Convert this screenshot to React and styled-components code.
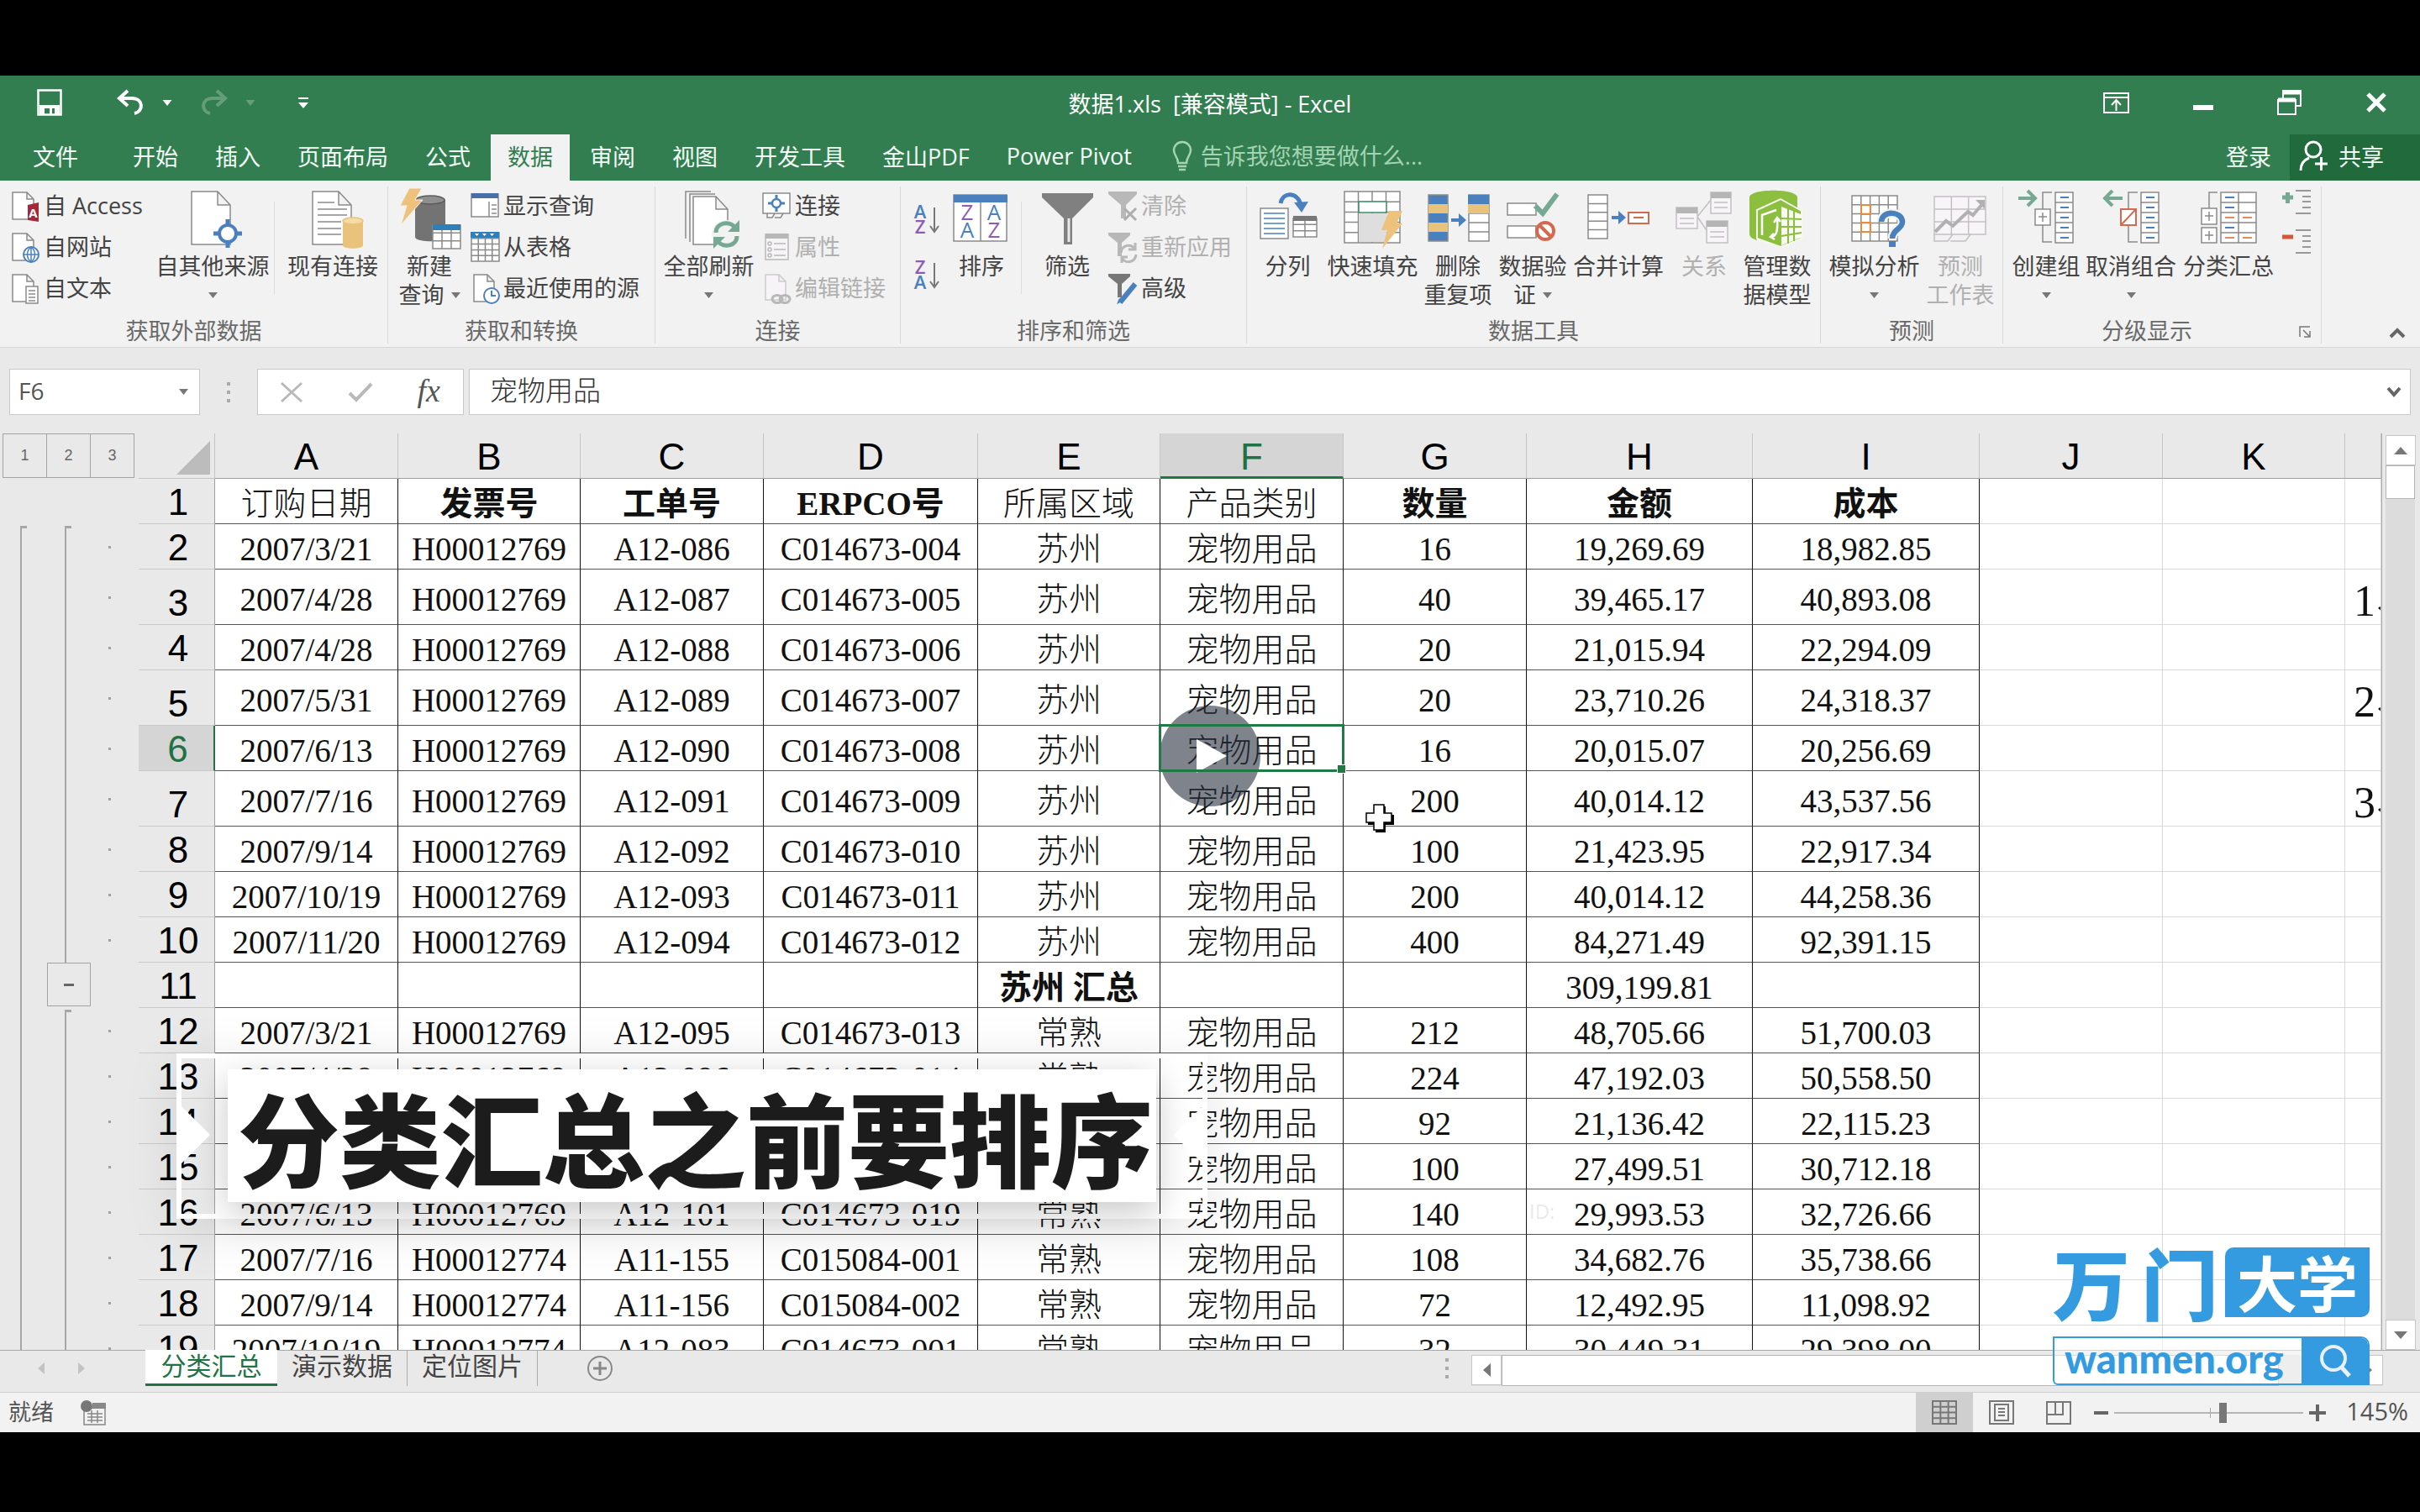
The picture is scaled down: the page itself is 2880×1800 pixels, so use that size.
import React from "react";
import styled, { createGlobalStyle, css } from "styled-components";

const ui = '"Open Sans", "Noto Sans CJK SC", sans-serif';
const song = '"Liberation Serif", "Noto Sans CJK SC", serif';
const green = "#337e50";
const line = "#8a8a8a";
const blue = "#4a80bd";
const logoBlue = "#359be1";

const GlobalStyle = createGlobalStyle`
  *, *::before, *::after { box-sizing: border-box; }
  html, body { margin: 0; background: #000; }
  body { font-family: ${ui}; font-size: 27px; color: #444; }
  button, input { font: inherit; color: inherit; border: 0; background: none; padding: 0; margin: 0; border-radius: 0; outline: none; }
  svg { display: block; flex: none; overflow: visible; }
`;

const Player = styled.div`
  position: relative;
  display: flex;
  height: 100vh;
  padding: 90px 0 95px;
  background: #000;
  overflow: hidden;
`;

const Window = styled.main`
  flex: 1;
  min-width: 0;
  display: flex;
  flex-direction: column;
  background: #e9e9e9;
`;

/* ---------- title bar ---------- */

const TitleBar = styled.header`
  flex: none;
  display: grid;
  grid-template-columns: 1fr auto 1fr;
  height: 70px;
  background: ${green};
  color: #fff;
`;

const Title = styled.h1`
  margin: 0;
  font-size: 27px;
  font-weight: 400;
  line-height: 68px;
  white-space: pre;
`;

const QuickAccess = styled.div`
  display: flex;
  align-items: center;
  padding: 0 0 6px 44px;
`;

const QuickButton = styled.button`
  margin-left: ${(p) => p.$gap || 0}px;
  color: #fff;
  opacity: ${(p) => (p.disabled ? 0.25 : 1)};
`;

const WindowControls = styled.div`
  display: flex;
  justify-content: flex-end;
  align-items: center;
  gap: 76px;
  padding: 0 40px 6px 0;
`;

/* ---------- ribbon tabs ---------- */

const TabBar = styled.nav`
  flex: none;
  display: flex;
  height: 55px;
  background: ${green};
  color: #f4fff7;
`;

const FileTab = styled.button`
  padding: 0 39px 4px;
  margin-right: 6px;
`;

const RibbonTab = styled.button`
  padding: 0 20px 4px;
  margin-right: 4px;
  white-space: nowrap;
  ${(p) => p.$active && css`
    background: #f2f2f2;
    color: ${green};
  `}
`;

const TellMe = styled.label`
  flex: 1;
  display: flex;
  align-items: center;
  gap: 10px;
  padding: 0 0 4px 24px;
  color: #a3d3b3;
`;

const TellMeInput = styled.input`
  width: 300px;
  &::placeholder { color: #a3d3b3; opacity: 1; }
`;

const SignIn = styled.button`
  padding: 0 22px 4px;
`;

const Share = styled.button`
  display: flex;
  align-items: center;
  gap: 12px;
  width: 155px;
  padding: 0 0 4px 11px;
  background: #216a3c;
`;

/* ---------- ribbon ---------- */

const Ribbon = styled.section`
  flex: none;
  display: flex;
  height: 199px;
  padding: 7px 0 4px;
  background: #f2f2f2;
  border-bottom: 1px solid #d5d5d5;
`;

const Group = styled.div`
  position: relative;
  flex: none;
  display: flex;
  flex-direction: column;
  width: ${(p) => p.$w}px;
  border-right: 1px solid #d8d8d8;
`;

const GroupBody = styled.div`
  flex: 1;
  display: flex;
  padding-left: ${(p) => p.$pad || 0}px;
`;

const GroupLabel = styled.div`
  height: 30px;
  line-height: 30px;
  text-align: center;
  color: #6a6a6a;
  padding-right: ${(p) => p.$shift || 0}px;
`;

const Large = styled.button`
  flex: none;
  display: flex;
  flex-direction: column;
  align-items: center;
  width: ${(p) => p.$w}px;
  line-height: 34px;
  white-space: nowrap;
  color: ${(p) => (p.disabled ? "#b0b0b0" : "#444")};
`;

const LargeLine = styled.span`
  display: flex;
  align-items: center;
  justify-content: center;
  gap: 8px;
  height: 34px;
`;

const Divider = styled.span`
  flex: none;
  width: 1px;
  height: 110px;
  margin: 18px 5px 0 0;
  background: #dedede;
`;

const SmallColumn = styled.div`
  flex: none;
  display: flex;
  flex-direction: column;
  width: ${(p) => p.$w}px;
  padding-left: ${(p) => p.$pad || 0}px;
`;

const Small = styled.button`
  display: flex;
  align-items: center;
  gap: 5px;
  height: 49px;
  line-height: 36px;
  padding-bottom: 3px;
  white-space: nowrap;
  color: ${(p) => (p.disabled ? "#b0b0b0" : "#444")};
`;

const SortColumn = styled.div`
  display: flex;
  flex-direction: column;
  gap: 28px;
  width: 49px;
  padding: 20px 0 0 16px;
`;

const DetailColumn = styled.div`
  display: flex;
  flex-direction: column;
  gap: 16px;
  padding-top: 3px;
`;

const Launcher = styled.button`
  position: absolute;
  right: 12px;
  bottom: 7px;
`;

const Collapse = styled.button`
  margin-left: auto;
  align-self: flex-end;
  padding: 0 17px 6px 0;
`;

/* ---------- formula bar ---------- */

const FormulaBar = styled.section`
  flex: none;
  display: flex;
  height: 102px;
  padding: 25px 11px 22px;
`;

const NameBox = styled.div`
  display: flex;
  align-items: center;
  width: 227px;
  padding: 0 13px 0 10px;
  background: #fff;
  border: 1px solid #c9c9c9;
`;

const NameInput = styled.input`
  flex: 1;
  min-width: 0;
  padding-bottom: 3px;
  font-size: 28px;
  color: #555;
`;

const Grip = styled.span`
  display: flex;
  flex-direction: column;
  justify-content: center;
  align-items: center;
  gap: 6px;
  width: ${(p) => p.$w}px;
  &::before, &::after, i { content: ""; width: 4px; height: 4px; background: #aaa; }
`;

const EditTools = styled.div`
  display: flex;
  align-items: center;
  justify-content: space-between;
  width: 246px;
  padding: 0 27px 0 26px;
  margin-right: 6px;
  background: #fff;
  border: 1px solid #c9c9c9;
`;

const Fx = styled.button`
  font-family: "Liberation Serif", serif;
  font-style: italic;
  font-size: 38px;
  line-height: 48px;
  padding-bottom: 3px;
  color: #555;
`;

const FormulaBox = styled.div`
  flex: 1;
  display: flex;
  align-items: center;
  padding: 0 10px 0 24px;
  background: #fff;
  border: 1px solid #c9c9c9;
`;

const FormulaInput = styled.input`
  flex: 1;
  min-width: 0;
  padding-bottom: 3px;
  font-size: 33px;
  font-weight: 300;
  line-height: 48px;
  color: #333;
`;

/* ---------- sheet ---------- */

const Sheet = styled.section`
  flex: 1;
  min-height: 0;
  display: flex;
  overflow: hidden;
`;

const Outline = styled.div`
  flex: none;
  width: 165px;
`;

const Levels = styled.div`
  display: flex;
  height: 54px;
  padding: 0 0 1px 3px;
`;

const Level = styled.button`
  width: 53px;
  margin-right: -1px;
  border: 1px solid #a3a3a3;
  font-family: "Liberation Sans", sans-serif;
  font-size: 18px;
  color: #666;
`;

const OutlineTracks = styled.div`
  display: grid;
  grid-template-columns: 53px 52px 1fr;
`;

const Track = styled.div`
  display: flex;
  flex-direction: column;
  padding-top: 56px;
`;

const Bracket = styled.span`
  flex: none;
  width: 8px;
  height: ${(p) => p.$h}px;
  margin-left: ${(p) => p.$x}px;
  border: solid #a6a6a6;
  border-width: 3px 0 0 2px;
`;

const Collapser = styled.button`
  flex: none;
  display: grid;
  place-items: center;
  width: 52px;
  height: 52px;
  margin: 0 0 4px 3px;
  border: 1px solid #a3a3a3;
`;

const Dots = styled.div`
  display: flex;
  flex-direction: column;
  padding-top: 54px;
`;

const DotRow = styled.span`
  flex: none;
  display: flex;
  align-items: center;
  height: ${(p) => p.$h}px;
  padding-left: 24px;
  &::before {
    content: "";
    width: 3px;
    height: 3px;
    background: ${(p) => (p.$dot ? "#a0a0a0" : "transparent")};
  }
`;

const GridPane = styled.div`
  flex: 1;
  min-width: 0;
  overflow: hidden;
  border-right: 1px solid #ababab;
`;

const Grid = styled.table`
  width: 100%;
  table-layout: fixed;
  border-collapse: separate;
  border-spacing: 0;
`;

const ColHead = styled.th`
  height: 54px;
  padding: ${(p) => (p.$on ? 5 : 3)}px 0 0;
  font: 400 44px/46px "Liberation Sans", sans-serif;
  color: ${(p) => (p.$on ? "#1f7244" : "#000")};
  background: ${(p) => (p.$on ? "#d5d5d5" : "#e9e9e9")};
  border-right: 1px solid #c4c4c4;
  border-bottom: ${(p) => (p.$on ? "3px solid #1b7b3c" : "1px solid #9f9f9f")};
`;

const Corner = styled.td`
  padding: 0 5px 4px 0;
  vertical-align: bottom;
  border-right: 1px solid #c4c4c4;
  border-bottom: 1px solid #c4c4c4;
  svg { margin-left: auto; }
`;

const RowHead = styled.th`
  height: ${(p) => p.$h}px;
  padding: 0 0 0 4px;
  vertical-align: bottom;
  font: 400 44px/50px "Liberation Sans", sans-serif;
  color: ${(p) => (p.$on ? "#1f7244" : "#000")};
  background: ${(p) => (p.$on ? "#d5d5d5" : "#e9e9e9")};
  border-right: ${(p) => (p.$on ? "2px solid #1f7244" : "1px solid #9f9f9f")};
  border-bottom: 1px solid #c9c9c9;
`;

const Cell = styled.td`
  position: relative;
  padding: 6px 0 0;
  text-align: center;
  vertical-align: middle;
  white-space: pre;
  font: ${(p) => (p.$bold ? 700 : 300)} 39px/46px ${song};
  color: #111;
  background: #fff;
  border-right: 1px solid #111;
  border-bottom: 1px solid #555;
`;

const Blank = styled.td`
  padding: 0;
  background: #fff;
  border-right: 1px solid #d9d9d9;
  border-bottom: 1px solid #d9d9d9;
`;

const Note = styled(Blank)`
  padding-left: 10px;
  overflow: hidden;
  white-space: nowrap;
  vertical-align: bottom;
  font: 300 52px/54px ${song};
  color: #111;
`;

const Selection = styled.span`
  position: absolute;
  inset: -2px;
  border: 3px solid #1f7a45;
  z-index: 1;
  &::after {
    content: "";
    position: absolute;
    right: -5px;
    bottom: -5px;
    width: 11px;
    height: 11px;
    background: #1f7a45;
    border: 1px solid #fff;
  }
`;

const VScroll = styled.div`
  flex: none;
  display: flex;
  flex-direction: column;
  width: 45px;
  padding: 2px 6px 0 4px;
`;

const ScrollButton = styled.button`
  flex: none;
  display: grid;
  place-items: center;
  width: 36px;
  height: 36px;
  background: #fff;
  border: 1px solid #c6c6c6;
`;

const VTrack = styled.div`
  flex: 1;
  background: #dcdcdc;
`;

const VThumb = styled.div`
  height: 40px;
  background: #fff;
  border: 1px solid #b5b5b5;
`;

/* ---------- sheet tabs & status ---------- */

const SheetBar = styled.section`
  flex: none;
  display: flex;
  height: 50px;
  padding-bottom: 7px;
  border-top: 1px solid #a8a8a8;
`;

const SheetNav = styled.div`
  display: flex;
  align-items: center;
  gap: 40px;
  width: 173px;
  padding-left: 45px;
`;

const SheetTab = styled.button`
  position: relative;
  width: 155px;
  font-size: 30px;
  line-height: 36px;
  padding-bottom: 6px;
  white-space: nowrap;
  border-right: 1px solid #ababab;
  ${(p) => p.$active && css`
    width: 157px;
    margin-top: -1px;
    background: #fff;
    color: #217346;
    border-right: 0;
    border-bottom: 3px solid #217346;
    padding-bottom: 3px;
  `}
`;

const AddSheet = styled.button`
  margin-left: 58px;
`;

const HScroll = styled.div`
  display: flex;
  width: 1085px;
  height: 37px;
  margin: 5px 44px 0 0;
  background: #dcdcdc;
`;

const HThumb = styled.div`
  width: 925px;
  background: #fff;
  border: 1px solid #b5b5b5;
`;

const HSpace = styled.span`
  flex: 1;
`;

const Status = styled.footer`
  flex: none;
  display: flex;
  align-items: center;
  height: 48px;
  padding: 0 14px 0 10px;
  background: #f2f2f2;
  border-top: 1px solid #d0d0d0;
  color: #555;
`;

const StatusText = styled.span`
  margin-right: 32px;
  padding-bottom: 4px;
`;

const ViewButton = styled.button`
  display: grid;
  place-items: center;
  width: 68px;
  height: 47px;
  background: ${(p) => (p.$active ? "#cfcfcf" : "transparent")};
`;

const ZoomControl = styled.div`
  display: flex;
  align-items: center;
  gap: 7px;
  padding: 0 0 0 8px;
`;

const ZoomRange = styled.input`
  appearance: none;
  width: 225px;
  height: 24px;
  background:
    linear-gradient(#aaa, #aaa) 114px center / 1px 12px no-repeat,
    linear-gradient(#b5b5b5, #b5b5b5) center / 100% 2px no-repeat;
  &::-webkit-slider-thumb {
    appearance: none;
    width: 9px;
    height: 24px;
    background: #777;
  }
`;

const ZoomValue = styled.span`
  width: 98px;
  padding-bottom: 4px;
  text-align: right;
  font-size: 29px;
`;

/* ---------- video overlays ---------- */

const PlayButton = styled.button`
  position: absolute;
  left: 50%;
  top: 50%;
  display: grid;
  place-items: center;
  width: 120px;
  height: 120px;
  margin: -60px 0 0 -60px;
  padding-left: 4px;
  border-radius: 50%;
  background: rgba(42, 50, 63, 0.6);
`;

const Pointer = styled.svg`
  position: absolute;
  left: 1625px;
  top: 957px;
`;

const Caption = styled.div`
  position: absolute;
  left: 210px;
  bottom: 349px;
  padding: 13px 55px 14px;
  border: 6px solid #fff;
  box-shadow: 0 12px 60px rgba(0, 0, 0, 0.1);
  &::before, &::after {
    content: "";
    position: absolute;
    top: 57px;
    border: solid transparent;
    border-width: 34px 0;
  }
  &::before { left: 0; border-left: 34px solid #fff; }
  &::after { right: 0; border-right: 34px solid #fff; }
`;

const CaptionText = styled.p`
  margin: 0;
  padding: 0 4px 0 12px;
  background: #fff;
  box-shadow: 0 12px 40px rgba(0, 0, 0, 0.22);
  font: 900 121px/158px "Noto Sans CJK SC", sans-serif;
  color: #1c1c1c;
  white-space: nowrap;
`;

const Watermark = styled.span`
  position: absolute;
  left: 1820px;
  bottom: 342px;
  font-size: 24px;
  line-height: 32px;
  color: rgba(0, 0, 0, 0.1);
`;

const Brand = styled.aside`
  position: absolute;
  right: 60px;
  bottom: 151px;
  width: 377px;
  font-family: "Noto Sans CJK SC", sans-serif;
`;

const BrandTop = styled.div`
  display: flex;
  height: 83px;
  margin-bottom: 23px;
`;

const BrandName = styled.span`
  flex: 1;
  display: flex;
  gap: 13px;
  font-size: 92px;
  font-weight: 900;
  line-height: 80px;
  color: ${logoBlue};
`;

const BrandBadge = styled.span`
  width: 172px;
  border-radius: 10px 0 10px 0;
  background: ${logoBlue};
  color: #fff;
  text-align: center;
  font-size: 72px;
  font-weight: 700;
  line-height: 80px;
`;

const BrandSite = styled.a`
  display: flex;
  justify-content: space-between;
  height: 58px;
  padding-left: 12px;
  border: 2px solid ${logoBlue};
  border-radius: 0 10px 0 6px;
  overflow: hidden;
  background: rgba(255, 255, 255, 0.5);
  color: ${logoBlue};
  text-decoration: none;
  font: 900 47px/48px Lato, sans-serif;
`;

const BrandSearch = styled.span`
  display: grid;
  place-items: center;
  width: 79px;
  background: ${logoBlue};
`;

/* ---------- icons ---------- */

const Caret = ({ color = "#777", w = 11 }) => (
  <svg width={w} height="7" viewBox="0 0 11 7"><path d="M0 0h11L5.5 7z" fill={color} /></svg>
);

const Art = ({ children }) => (
  <svg width="84" height="78" viewBox="0 0 84 78" fill="none" stroke={line} strokeWidth="1.5">{children}</svg>
);

const Mini = ({ children, dim }) => (
  <svg width="34" height="38" viewBox="0 0 34 38" fill="none" stroke={line} strokeWidth="1.5" opacity={dim ? 0.55 : 1}>{children}</svg>
);

const MiniDoc = () => <path d="M2 3h17l8 8v24H2zM19 3v8h8" fill="#fff" />;

const cells = (x, y, w, h, cols, rows) => {
  const d = [`M${x} ${y}h${w}v${h}h${-w}z`];
  for (let i = 1; i < cols; i++) d.push(`M${x + (w * i) / cols} ${y}v${h}`);
  for (let i = 1; i < rows; i++) d.push(`M${x} ${y + (h * i) / rows}h${w}`);
  return d.join("");
};

const art = {
  other: (
    <Art>
      <path d="M17 6h31l15 16v47H17zM48 6v16h15" fill="#fff" />
      <path d="M60 39v34M43 56h34" stroke={blue} strokeWidth="5" />
      <circle cx="60" cy="56" r="10" fill="#fff" stroke={blue} strokeWidth="4" />
    </Art>
  ),
  existing: (
    <Art>
      <path d="M18 6h31l15 16v47H18zM49 6v16h15" fill="#fff" />
      <path d="M24 19h20M24 27h35M24 34h35M24 42h28M24 50h28M24 57h28" />
      <path d="M54 41v29c0 5 24 5 24 0V41z" fill="#e9c37c" stroke="none" />
      <ellipse cx="66" cy="41" rx="12" ry="4" fill="#f5dba6" stroke="#e9c37c" />
    </Art>
  ),
  query: (
    <Art>
      <path d="M25 16v44c0 7 36 7 36 0V16z" fill="#737373" stroke="none" />
      <ellipse cx="43" cy="16" rx="17" ry="5" fill="#8f8f8f" stroke="#5c5c5c" />
      <path d="M18 2h15l-8 14h9L8 46l7-23H7z" fill="#efc27c" stroke="#f2f2f2" strokeWidth="1" />
      <path d={cells(46, 46, 33, 28, 3, 3)} fill="#fff" />
      <path d="M46 45h33v7H46z" fill="#2f7fb8" stroke="none" />
    </Art>
  ),
  refresh: (
    <Art>
      <path d="M14 62V6h30M19 66V9h30" />
      <path d="M23 12h27l14 15v42H23zM50 12v15h14" fill="#fff" />
      <circle cx="62" cy="57" r="17" fill="#f2f2f2" stroke="none" />
      <path d="M50 55c0-12 16-15 23-6M75 59c0 12-16 15-23 6" stroke="#76a993" strokeWidth="5" />
      <path d="M78 40v14H64zM47 74V60h14z" fill="#76a993" stroke="none" />
    </Art>
  ),
  sort: (
    <Art>
      <path d="M9 10h63v55H9zM41 18v47" fill="#fff" />
      <path d="M9 10h64v9H9z" fill={blue} stroke="none" />
      <g fontFamily="Open Sans, sans-serif" fontSize="26" textAnchor="middle" stroke="none">
        <text x="25" y="40" fill="#8f5bb5">Z</text>
        <text x="57" y="40" fill={blue}>A</text>
        <text x="25" y="61" fill={blue}>A</text>
        <text x="57" y="61" fill="#8f5bb5">Z</text>
      </g>
    </Art>
  ),
  filter: (
    <Art>
      <path d="M12 8h61v5L48 38v31H38V38L12 13z" fill="#808080" stroke="none" />
      <path d="M44 38v28" stroke="#e9e9e9" strokeWidth="3" />
    </Art>
  ),
  split: (
    <Art>
      <path d="M9 26h33v36H9z" fill="#fff" />
      <path d="M13 32h25M13 38h25M13 44h25M13 50h25M13 56h25" stroke={blue} />
      <path d={cells(48, 38, 28, 22, 2, 3)} fill="#fff" />
      <path d="M48 35h28v6H48z" fill="#777" stroke="none" />
      <path d="M33 20c3-15 21-13 24 2" stroke={blue} strokeWidth="5" />
      <path d="M49 19l9 12 8-13z" fill={blue} stroke="none" />
    </Art>
  ),
  flash: (
    <Art>
      <path d={cells(8, 6, 66, 61, 4, 5)} fill="#fff" />
      <path d="M25 32h33v34H25z" fill="#dedede" stroke="none" />
      <path d="M25 18h33v13H25z" fill="#fff" stroke="#3c9068" />
      <path d="M61 29h16l-7 15h7L53 74l6-22h-7z" fill="#efc27c" stroke="none" />
    </Art>
  ),
  dedupe: (
    <Art>
      <path d="M7 10h23v55H7z" fill={blue} />
      <path d="M7 21h23v11H7zM7 43h23v11H7z" fill="#e9c37c" stroke="none" />
      <path d={cells(55, 10, 24, 55, 1, 5)} fill="#fff" />
      <path d="M54 10h25v11H54z" fill={blue} stroke="none" />
      <path d="M54 21h25v11H54z" fill="#e9c37c" stroke="none" />
      <path d="M34 38h9v-6l9 8-9 8v-6h-9z" fill={blue} stroke="none" />
    </Art>
  ),
  validate: (
    <Art>
      <path d="M12 20h34v14H12zM12 47h34v14H12z" fill="#fff" />
      <path d="M45 23l9 9L71 9" stroke="#76a993" strokeWidth="6" />
      <circle cx="57" cy="53" r="10" fill="#fff" stroke="#d5694f" strokeWidth="4" />
      <path d="M50 46l14 14" stroke="#d5694f" strokeWidth="4" />
    </Art>
  ),
  consolidate: (
    <Art>
      <path d={cells(6, 10, 23, 52, 1, 5)} fill="#fff" />
      <path d="M34 35h8v-6l9 8-9 8v-6h-8z" fill={blue} stroke="none" />
      <path d="M54 31h24v13H54zM60 37h12" fill="#fff" stroke="#d5694f" strokeWidth="2" />
    </Art>
  ),
  relation: (
    <Art>
      <g stroke="#c4c0c4">
        <path d="M34 36L50 16M34 36l11 16" />
        <path d="M9 25h25v25H9zM50 7h24v25H50zM45 41h25v26H45z" fill="#f7f5f7" />
        <path d="M13 38h17M13 44h17M54 19h16M54 25h16M49 54h17M49 60h17" />
        <path d="M9 25h25v7H9zM50 7h24v7H50zM45 41h25v7H45z" fill="#b5b5b5" stroke="none" />
      </g>
    </Art>
  ),
  model: (
    <Art>
      <path d="M9 13C9 2 66 2 66 13v40H18v11c-6-2-9-4-9-8z" fill="#8cbf3f" stroke="none" />
      <path d="M18 28l28-13 25 14v33L46 72 18 62z" fill="#8cbf3f" stroke="#f4f9ec" strokeWidth="2" />
      <path d="M47 24l23 9v28l-23 9z" fill="#f8fbf2" stroke="none" />
      <path d="M55 26v42M62 29v36M47 38l24 1M47 48h24M47 59l24-4" stroke="#8cbf3f" strokeWidth="2" />
      <path d="M24 58V34l17-6M35 60c6-1 8-6 7-22m-4 5l4-6 4 5M38 56l-4 4 5 3" stroke="#fff" strokeWidth="2.5" />
    </Art>
  ),
  whatif: (
    <Art>
      <path d={cells(15, 11, 54, 54, 5, 5)} fill="#fff" />
      <path d="M26 22h11v11H26zM26 43h11v11H26z" stroke="#e98b3c" strokeWidth="2" />
      <path d="M50 42c0-14 25-13 25 0 0 9-12 9-12 20" stroke="#f2f2f2" strokeWidth="11" />
      <path d="M50 42c0-14 25-13 25 0 0 9-12 9-12 20" stroke={blue} strokeWidth="6.5" />
      <path d="M59 65h8v7h-8z" fill={blue} stroke="none" />
    </Art>
  ),
  forecast: (
    <Art>
      <g stroke="#c4c0c4">
        <path d={cells(11, 12, 61, 45, 3, 3)} fill="#f7f5f7" />
        <path d="M11 57v8h16l6-8M30 65h18l6-8" />
        <path d="M12 54l13-13 8 6 18-17 6 4 12-14" stroke="#b3b0b3" strokeWidth="4" />
        <path d="M60 16h11v11z" fill="#b3b0b3" stroke="none" />
      </g>
    </Art>
  ),
  group: (
    <Art>
      <path d="M49 7H38v20M38 46v20h11" />
      <path d={cells(53, 7, 21, 60, 1, 5)} fill="#fff" />
      <path d="M29 27h18v19H29z" fill="#fff" />
      <path d="M33 36h10M38 31v11" />
      <path d="M59 13h10M59 25h10M59 37h10M59 49h10M59 61h10" stroke={blue} strokeWidth="2" />
      <path d="M9 14h19M20 5l9 9-9 9" stroke="#76a993" strokeWidth="4" />
    </Art>
  ),
  ungroup: (
    <Art>
      <path d="M50 7H39v20M39 46v20h11" />
      <path d={cells(54, 7, 21, 60, 1, 5)} fill="#fff" />
      <path d="M30 27h18v19H30zM31 45l16-17" fill="#fff" stroke="#d5694f" strokeWidth="2" />
      <path d="M60 13h10M60 25h10M60 37h10M60 49h10M60 61h10" stroke={blue} strokeWidth="2" />
      <path d="M32 14H12M20 5l-9 9 9 9" stroke="#76a993" strokeWidth="4" />
    </Art>
  ),
  subtotal: (
    <Art>
      <path d="M29 7H19v20" />
      <path d={cells(33, 7, 42, 60, 2, 5)} fill="#fff" />
      <path d="M10 26h18v19H10zM10 49h18v18H10z" fill="#fff" />
      <path d="M14 35h10M19 30v11M14 58h10M19 53v11" />
      <path d="M38 13h11M38 25h11M38 49h11" stroke={blue} strokeWidth="2" />
      <path d="M38 37h11M59 37h11M38 61h11M59 61h11" stroke="#e58a5a" strokeWidth="2" />
    </Art>
  ),
};

const mini = {
  access: <Mini><MiniDoc /><path d="M20 18l13-3v23l-13-2z" fill="#a4273a" stroke="none" /><text x="26.5" y="33" fontSize="15" fontWeight="700" textAnchor="middle" fill="#fff" stroke="none">A</text></Mini>,
  web: <Mini><MiniDoc /><circle cx="24" cy="28" r="9" fill="#fff" stroke={blue} strokeWidth="2" /><path d="M15 28h18M24 19v18M24 19c-6 5-6 13 0 18M24 19c6 5 6 13 0 18" stroke={blue} /></Mini>,
  text: <Mini><MiniDoc /><path d="M18 17h14v20H18zM21 22h8M21 26h8M21 30h8M21 34h8" fill="#fff" /></Mini>,
  show: <Mini><path d="M1 5h32v27H1zM22 14v18M25 18h6M25 23h6M25 28h6" fill="#fff" /><path d="M1 4h32v6H1z" fill="#4a6fa8" stroke="none" /></Mini>,
  table: <Mini><path d={cells(1, 2, 33, 34, 4, 5)} fill="#fff" /><path d="M0 1h34v7H0z" fill="#2f7fb8" stroke="none" /><path d="M5 3h5l-2.500 3zM14 3h5l-2.500 3zM23 3h5l-2.500 3z" fill="#fff" stroke="none" /></Mini>,
  recent: <Mini><path d="M4 3h16l8 8v24H4zM20 3v8h8" fill="#fff" /><circle cx="25" cy="28" r="9" fill="#fff" stroke={blue} strokeWidth="2" /><path d="M25 22v6h5" stroke={blue} strokeWidth="2" /></Mini>,
  link: <Mini><path d="M1 4h32v24H1zM6 28v5h6l3-5M15 33h7l3-5" fill="#fff" /><path d="M17 6v20M7 16h20" stroke={blue} strokeWidth="3" /><circle cx="17" cy="16" r="5" fill="#fff" stroke={blue} strokeWidth="2.500" /></Mini>,
  props: <Mini dim><path d="M4 4h27v30H4z" fill="#fbf7fb" /><path d="M4 3h27v6H4z" fill="#888" stroke="none" /><path d="M14 15h14M14 22h14M14 29h14" /><circle cx="9" cy="15" r="2" /><circle cx="9" cy="22" r="2" /><circle cx="9" cy="29" r="2" /></Mini>,
  editlink: <Mini dim><path d="M4 3h16l8 8v22H4zM20 3v8h8" fill="#fbf7fb" stroke="#b3a9b3" /><ellipse cx="18" cy="32" rx="6" ry="4.500" strokeWidth="3" /><ellipse cx="27" cy="32" rx="6" ry="4.500" strokeWidth="3" /></Mini>,
  clear: <Mini dim><path d="M0 2h34v3L21 18v16h-6V18L0 5z" fill="#8a8a8a" stroke="none" /><path d="M19 22l14 14M33 22L19 36" strokeWidth="3" stroke="#777" /></Mini>,
  reapply: <Mini dim><path d="M0 2h26v3L16 14v16h-5V14L0 5z" fill="#8a8a8a" stroke="none" /><path d="M15 26c1-10 12-11 16-5M33 28c-1 10-13 11-16 5M32 14v8h-8M16 38v-7h7" strokeWidth="3" /></Mini>,
  advanced: <Mini><path d="M0 2h26v3L16 14v16h-5V14L0 5z" fill="#777" stroke="none" /><path d="M14 36l18-22" stroke={blue} strokeWidth="6" /><path d="M10 38l3-7 4 4z" fill={blue} stroke="none" /></Mini>,
};

const SortGlyph = ({ top, bottom, topColor, bottomColor }) => (
  <svg width="30" height="38" viewBox="0 0 30 38" fill="none">
    <g fontFamily="Open Sans, sans-serif" fontWeight="600" fontSize="22" textAnchor="middle">
      <text x="7" y="18" fill={topColor}>{top}</text>
      <text x="7" y="36" fill={bottomColor}>{bottom}</text>
    </g>
    <path d="M24 5v29M19 27l5 7 5-7" stroke="#777" strokeWidth="2" />
  </svg>
);

const DetailGlyph = ({ plus }) => (
  <svg width="34" height="31" viewBox="0 0 34 31" fill="none">
    <path d="M16 2h18M24 9h10M24 15h10M24 22h10M16 29h18" stroke="#999" strokeWidth="2" />
    <path d={plus ? "M0 10h13M6.500 4v13" : "M0 10h13"} stroke={plus ? "#76a993" : "#d5563a"} strokeWidth="5" />
  </svg>
);

/* ---------- ribbon parts ---------- */

function LargeButton({ icon, w, lines, caret, disabled }) {
  return (
    <Large $w={w} disabled={disabled}>
      {art[icon]}
      {lines.map((t, i) => (
        <LargeLine key={t}>{t}{caret === "inline" && i === lines.length - 1 && <Caret />}</LargeLine>
      ))}
      {caret === "below" && <LargeLine><Caret /></LargeLine>}
    </Large>
  );
}

function SmallButtons({ w, pad, items }) {
  return (
    <SmallColumn $w={w} $pad={pad}>
      {items.map(([icon, label, disabled]) => (
        <Small key={label} disabled={disabled}>{mini[icon]}{label}</Small>
      ))}
    </SmallColumn>
  );
}

/* ---------- data ---------- */

const columns = [
  ["A", 218], ["B", 217], ["C", 218], ["D", 255], ["E", 217], ["F", 218],
  ["G", 218], ["H", 269], ["I", 270], ["J", 218], ["K", 217], ["", null],
];

const pet = "宠物用品";
const rows = [
  ["订购日期", "发票号", "工单号", "ERPCO号", "所属区域", "产品类别", "数量", "金额", "成本"],
  ["2007/3/21", "H00012769", "A12-086", "C014673-004", "苏州", pet, "16", "19,269.69", "18,982.85"],
  ["2007/4/28", "H00012769", "A12-087", "C014673-005", "苏州", pet, "40", "39,465.17", "40,893.08"],
  ["2007/4/28", "H00012769", "A12-088", "C014673-006", "苏州", pet, "20", "21,015.94", "22,294.09"],
  ["2007/5/31", "H00012769", "A12-089", "C014673-007", "苏州", pet, "20", "23,710.26", "24,318.37"],
  ["2007/6/13", "H00012769", "A12-090", "C014673-008", "苏州", pet, "16", "20,015.07", "20,256.69"],
  ["2007/7/16", "H00012769", "A12-091", "C014673-009", "苏州", pet, "200", "40,014.12", "43,537.56"],
  ["2007/9/14", "H00012769", "A12-092", "C014673-010", "苏州", pet, "100", "21,423.95", "22,917.34"],
  ["2007/10/19", "H00012769", "A12-093", "C014673-011", "苏州", pet, "200", "40,014.12", "44,258.36"],
  ["2007/11/20", "H00012769", "A12-094", "C014673-012", "苏州", pet, "400", "84,271.49", "92,391.15"],
  ["", "", "", "", "苏州 汇总", "", "", "309,199.81", ""],
  ["2007/3/21", "H00012769", "A12-095", "C014673-013", "常熟", pet, "212", "48,705.66", "51,700.03"],
  ["2007/4/28", "H00012769", "A12-096", "C014673-014", "常熟", pet, "224", "47,192.03", "50,558.50"],
  ["", "", "", "", "", pet, "92", "21,136.42", "22,115.23"],
  ["", "", "", "", "", pet, "100", "27,499.51", "30,712.18"],
  ["2007/6/13", "H00012769", "A12-101", "C014673-019", "常熟", pet, "140", "29,993.53", "32,726.66"],
  ["2007/7/16", "H00012774", "A11-155", "C015084-001", "常熟", pet, "108", "34,682.76", "35,738.66"],
  ["2007/9/14", "H00012774", "A11-156", "C015084-002", "常熟", pet, "72", "12,492.95", "11,098.92"],
  ["2007/10/19", "H00012774", "A12-083", "C014673-001", "常熟", pet, "32", "30,449.31", "29,398.00"],
];
const tallRows = [3, 5, 7];
const notes = { 3: "1、", 5: "2、", 7: "3、" };
const boldHeads = [1, 2, 3, 6, 7, 8];
const heightOf = (n) => (tallRows.includes(n) ? 66 : 54);
const isBold = (n, c) => (n === 1 && boldHeads.includes(c)) || (n === 11 && c === 4);

export default function App() {
  return (
    <Player>
      <GlobalStyle />
      <Window>
        <TitleBar>
          <QuickAccess>
            <QuickButton aria-label="保存">
              <svg width="30" height="32" viewBox="0 0 30 32"><path d="M1.500 1.500h27v29h-27z" fill="none" stroke="#fff" strokeWidth="2.500" /><path d="M3 19h24v11h-6v-7h-3v7h-3v-7H9v7H3z" fill="#fff" /></svg>
            </QuickButton>
            <QuickButton $gap={65} aria-label="撤消">
              <svg width="33" height="30" viewBox="0 0 33 30" fill="none" stroke="#fff" strokeWidth="4"><path d="M13 1L3 10l10 9M4 10h14c14 0 14 16 3 18" /></svg>
            </QuickButton>
            <QuickButton $gap={21} aria-label="撤消列表"><Caret color="#fff" w={12} /></QuickButton>
            <QuickButton $gap={33} disabled aria-label="恢复">
              <svg width="33" height="30" viewBox="0 0 33 30" fill="none" stroke="#fff" strokeWidth="4"><path d="M20 1l10 9-10 9M29 10H15C1 10 1 26 12 28" /></svg>
            </QuickButton>
            <QuickButton $gap={21} disabled aria-label="恢复列表"><Caret color="#fff" w={12} /></QuickButton>
            <QuickButton $gap={51} aria-label="自定义快速访问工具栏">
              <svg width="12" height="13" viewBox="0 0 12 13" fill="#fff"><path d="M0 0h12v2H0zM0 6h12l-6 7z" /></svg>
            </QuickButton>
          </QuickAccess>
          <Title>数据1.xls  [兼容模式] - Excel</Title>
          <WindowControls>
            <QuickButton aria-label="功能区显示选项">
              <svg width="31" height="25" viewBox="0 0 31 25" fill="none" stroke="#fff" strokeWidth="2"><path d="M1 1h29v23H1zM1 6h29M15.500 22V10M10 15l5.500-6 5.500 6" /></svg>
            </QuickButton>
            <QuickButton aria-label="最小化">
              <svg width="24" height="25" viewBox="0 0 24 25"><path d="M0 15h24v6H0z" fill="#fff" /></svg>
            </QuickButton>
            <QuickButton aria-label="还原">
              <svg width="30" height="30" viewBox="0 0 30 30" fill="none" stroke="#fff" strokeWidth="2"><path d="M1 12h21v17H1zM7 10V1h21v18h-5" /><path d="M1 12h21M7 3h21" strokeWidth="5" /></svg>
            </QuickButton>
            <QuickButton aria-label="关闭">
              <svg width="24" height="24" viewBox="0 0 24 24" stroke="#fff" strokeWidth="5"><path d="M2 2l20 20M22 2L2 22" /></svg>
            </QuickButton>
          </WindowControls>
        </TitleBar>

        <TabBar>
          <FileTab>文件</FileTab>
          {["开始", "插入", "页面布局", "公式", "数据", "审阅", "视图", "开发工具", "金山PDF", "Power Pivot"].map((t) => (
            <RibbonTab key={t} $active={t === "数据"}>{t}</RibbonTab>
          ))}
          <TellMe>
            <svg width="24" height="36" viewBox="0 0 24 36" fill="none" stroke="#a3d3b3" strokeWidth="2.500"><path d="M7 26C7 19 2 17 2 11a10 10 0 0 1 20 0c0 6-5 8-5 15zM7 30h10M8 34h8" /></svg>
            <TellMeInput aria-label="操作说明搜索" placeholder="告诉我您想要做什么..." />
          </TellMe>
          <SignIn>登录</SignIn>
          <Share>
            <svg width="35" height="37" viewBox="0 0 35 37" fill="none" stroke="#fff" strokeWidth="3"><circle cx="17" cy="11" r="9" /><path d="M2 36c0-9 5-13 10-15M19 28h15M26.500 20v16" /></svg>
            共享
          </Share>
        </TabBar>

        <Ribbon>
          <Group $w={462}>
            <GroupBody>
              <SmallButtons w={180} pad={13} items={[["access", "自 Access"], ["web", "自网站"], ["text", "自文本"]]} />
              <LargeButton icon="other" w={146} lines={["自其他来源"]} caret="below" />
              <Divider />
              <LargeButton icon="existing" w={128} lines={["现有连接"]} />
            </GroupBody>
            <GroupLabel>获取外部数据</GroupLabel>
          </Group>
          <Group $w={318}>
            <GroupBody>
              <LargeButton icon="query" w={98} lines={["新建", "查询"]} caret="inline" />
              <SmallButtons w={210} items={[["show", "显示查询"], ["table", "从表格"], ["recent", "最近使用的源"]]} />
            </GroupBody>
            <GroupLabel>获取和转换</GroupLabel>
          </Group>
          <Group $w={292}>
            <GroupBody>
              <LargeButton icon="refresh" w={127} lines={["全部刷新"]} caret="below" />
              <SmallButtons w={160} items={[["link", "连接"], ["props", "属性", true], ["editlink", "编辑链接", true]]} />
            </GroupBody>
            <GroupLabel>连接</GroupLabel>
          </Group>
          <Group $w={412}>
            <GroupBody>
              <SortColumn>
                <SortGlyph top="A" bottom="Z" topColor={blue} bottomColor="#8f5bb5" />
                <SortGlyph top="Z" bottom="A" topColor="#8f5bb5" bottomColor={blue} />
              </SortColumn>
              <LargeButton icon="sort" w={94} lines={["排序"]} />
              <Divider />
              <LargeButton icon="filter" w={98} lines={["筛选"]} />
              <SmallButtons w={150} items={[["clear", "清除", true], ["reapply", "重新应用", true], ["advanced", "高级"]]} />
            </GroupBody>
            <GroupLabel>排序和筛选</GroupLabel>
          </Group>
          <Group $w={683}>
            <GroupBody>
              <LargeButton icon="split" w={97} lines={["分列"]} />
              <LargeButton icon="flash" w={105} lines={["快速填充"]} />
              <LargeButton icon="dedupe" w={98} lines={["删除", "重复项"]} />
              <LargeButton icon="validate" w={80} lines={["数据验", "证"]} caret="inline" />
              <LargeButton icon="consolidate" w={124} lines={["合并计算"]} />
              <LargeButton icon="relation" w={80} lines={["关系"]} disabled />
              <LargeButton icon="model" w={94} lines={["管理数", "据模型"]} />
            </GroupBody>
            <GroupLabel>数据工具</GroupLabel>
          </Group>
          <Group $w={217}>
            <GroupBody>
              <LargeButton icon="whatif" w={127} lines={["模拟分析"]} caret="below" />
              <LargeButton icon="forecast" w={78} lines={["预测", "工作表"]} disabled />
            </GroupBody>
            <GroupLabel>预测</GroupLabel>
          </Group>
          <Group $w={379}>
            <GroupBody $pad={2}>
              <LargeButton icon="group" w={98} lines={["创建组"]} caret="below" />
              <LargeButton icon="ungroup" w={104} lines={["取消组合"]} caret="below" />
              <LargeButton icon="subtotal" w={128} lines={["分类汇总"]} />
              <DetailColumn>
                <DetailGlyph plus />
                <DetailGlyph />
              </DetailColumn>
            </GroupBody>
            <GroupLabel $shift={36}>分级显示</GroupLabel>
            <Launcher aria-label="分级显示设置">
              <svg width="14" height="14" viewBox="0 0 14 14" fill="none" stroke="#777" strokeWidth="1.500"><path d="M1 13V1h12M5 5l7 7M13 6v7H6" /></svg>
            </Launcher>
          </Group>
          <Collapse aria-label="折叠功能区">
            <svg width="20" height="13" viewBox="0 0 20 13" fill="none" stroke="#666" strokeWidth="4"><path d="M2 11l8-8 8 8" /></svg>
          </Collapse>
        </Ribbon>

        <FormulaBar>
          <NameBox>
            <NameInput aria-label="名称框" defaultValue="F6" />
            <Caret />
          </NameBox>
          <Grip $w={68}><i /></Grip>
          <EditTools>
            <button aria-label="取消"><svg width="28" height="24" viewBox="0 0 28 24" stroke="#b9b9b9" strokeWidth="3"><path d="M2 1l24 22M26 1L2 23" /></svg></button>
            <button aria-label="输入"><svg width="30" height="24" viewBox="0 0 30 24" fill="none" stroke="#b9b9b9" strokeWidth="4"><path d="M2 13l8 8L28 2" /></svg></button>
            <Fx aria-label="插入函数">fx</Fx>
          </EditTools>
          <FormulaBox>
            <FormulaInput aria-label="编辑栏" defaultValue="宠物用品" />
            <svg width="18" height="13" viewBox="0 0 18 13" fill="none" stroke="#666" strokeWidth="4"><path d="M2 2l7 8 7-8" /></svg>
          </FormulaBox>
        </FormulaBar>

        <Sheet>
          <Outline>
            <Levels><Level>1</Level><Level>2</Level><Level>3</Level></Levels>
            <OutlineTracks>
              <Track><Bracket $x={24} $h={1200} /></Track>
              <Track>
                <Bracket $x={24} $h={520} />
                <Collapser aria-label="折叠分组">
                  <svg width="12" height="3" viewBox="0 0 12 3"><path d="M0 0h12v3H0z" fill="#666" /></svg>
                </Collapser>
                <Bracket $x={24} $h={600} />
              </Track>
              <Dots>
                {rows.slice(1).map((r, i) => (
                  <DotRow key={i} $h={heightOf(i + 2)} $dot={i + 2 !== 11} />
                ))}
              </Dots>
            </OutlineTracks>
          </Outline>

          <GridPane>
            <Grid>
              <colgroup>
                <col width="91" />
                {columns.map(([name, w]) => <col key={name} width={w || undefined} />)}
              </colgroup>
              <thead>
                <tr>
                  <Corner><svg width="40" height="40" viewBox="0 0 40 40"><path d="M40 0v40H0z" fill="#bcbcbc" /></svg></Corner>
                  {columns.map(([name]) => <ColHead key={name} scope="col" $on={name === "F"}>{name}</ColHead>)}
                </tr>
              </thead>
              <tbody>
                {rows.map((row, i) => {
                  const n = i + 1;
                  return (
                    <tr key={n}>
                      <RowHead scope="row" $h={heightOf(n)} $on={n === 6}>{n}</RowHead>
                      {row.map((v, c) => (
                        <Cell key={c} $bold={isBold(n, c)}>{v}{n === 6 && c === 5 && <Selection />}</Cell>
                      ))}
                      <Blank />
                      <Blank />
                      <Note>{notes[n]}</Note>
                    </tr>
                  );
                })}
              </tbody>
            </Grid>
          </GridPane>

          <VScroll>
            <ScrollButton aria-label="向上滚动"><svg width="16" height="9" viewBox="0 0 16 9"><path d="M0 9h16L8 0z" fill="#777" /></svg></ScrollButton>
            <VTrack><VThumb /></VTrack>
            <ScrollButton aria-label="向下滚动"><svg width="16" height="9" viewBox="0 0 16 9"><path d="M0 0h16L8 9z" fill="#777" /></svg></ScrollButton>
          </VScroll>
        </Sheet>

        <SheetBar>
          <SheetNav>
            <svg width="8" height="14" viewBox="0 0 8 14"><path d="M8 0v14L0 7z" fill="#c3c3c3" /></svg>
            <svg width="8" height="14" viewBox="0 0 8 14"><path d="M0 0v14l8-7z" fill="#c3c3c3" /></svg>
          </SheetNav>
          <SheetTab $active>分类汇总</SheetTab>
          <SheetTab>演示数据</SheetTab>
          <SheetTab>定位图片</SheetTab>
          <AddSheet aria-label="新工作表">
            <svg width="32" height="32" viewBox="0 0 32 32" fill="none" stroke="#888" strokeWidth="2"><circle cx="16" cy="16" r="14" /><path d="M8 16h16M16 8v16" strokeWidth="3" /></svg>
          </AddSheet>
          <HSpace />
          <Grip $w={58}><i /></Grip>
          <HScroll>
            <ScrollButton aria-label="向左滚动"><svg width="9" height="16" viewBox="0 0 9 16"><path d="M9 0v16L0 8z" fill="#777" /></svg></ScrollButton>
            <HThumb />
            <HSpace />
            <ScrollButton aria-label="向右滚动"><svg width="9" height="16" viewBox="0 0 9 16"><path d="M0 0v16l9-8z" fill="#777" /></svg></ScrollButton>
          </HScroll>
        </SheetBar>

        <Status>
          <StatusText>就绪</StatusText>
          <svg width="30" height="30" viewBox="0 0 30 30" fill="none" stroke="#888" strokeWidth="1.500"><path d="M4 9h25v20H4zM8 16h18M8 20h18M8 24h18M13 12v15M20 12v15" /><path d="M14 3h16v7H14z" fill="#888" stroke="none" /><circle cx="7" cy="7" r="7" fill="#777" stroke="none" /></svg>
          <HSpace />
          <ViewButton $active aria-label="普通">
            <svg width="30" height="29" viewBox="0 0 30 29" fill="none" stroke="#777" strokeWidth="2"><path d={cells(1, 1, 28, 27, 3, 4)} /></svg>
          </ViewButton>
          <ViewButton aria-label="页面布局视图">
            <svg width="30" height="29" viewBox="0 0 30 29" fill="none" stroke="#777" strokeWidth="2"><path d="M1 1h28v27H1zM7 5h16v19H7zM11 10h8M11 14h8M11 18h8" /></svg>
          </ViewButton>
          <ViewButton aria-label="分页预览">
            <svg width="30" height="28" viewBox="0 0 30 28" fill="none" stroke="#777" strokeWidth="2"><path d="M1 1h28v26H1zM11 1v15M1 16h19V1" /></svg>
          </ViewButton>
          <ZoomControl>
            <button aria-label="缩小"><svg width="17" height="20" viewBox="0 0 17 20"><path d="M0 8h17v4H0z" fill="#666" /></svg></button>
            <ZoomRange type="range" aria-label="显示比例" min="0" max="100" defaultValue="58" />
            <button aria-label="放大"><svg width="20" height="20" viewBox="0 0 20 20"><path d="M0 8h8V0h4v8h8v4h-8v8H8v-8H0z" fill="#666" /></svg></button>
          </ZoomControl>
          <ZoomValue>145%</ZoomValue>
        </Status>
      </Window>

      <Caption><CaptionText>分类汇总之前要排序</CaptionText></Caption>
      <Watermark>ID:</Watermark>
      <Brand>
        <BrandTop>
          <BrandName><span>万</span><span>门</span></BrandName>
          <BrandBadge>大学</BrandBadge>
        </BrandTop>
        <BrandSite href="#wanmen">
          wanmen.org
          <BrandSearch>
            <svg width="38" height="38" viewBox="0 0 38 38" fill="none" stroke="#e8f1fa" strokeWidth="4"><circle cx="17" cy="16" r="14" /><path d="M26 26l10 11" strokeWidth="5" /></svg>
          </BrandSearch>
        </BrandSite>
      </Brand>
      <PlayButton aria-label="播放">
        <svg width="36" height="40" viewBox="0 0 36 40"><path d="M0 0l36 20L0 40z" fill="#fff" /></svg>
      </PlayButton>
      <Pointer width="34" height="34" viewBox="0 0 34 34">
        <path d="M12 3h12v10h10v12H24v9H12v-9H3V13h9z" fill="#000" />
        <path d="M10 1h12v10h9v11h-9v9H10v-9H1V11h9z" fill="#fff" stroke="#000" strokeWidth="1.500" />
      </Pointer>
    </Player>
  );
}
